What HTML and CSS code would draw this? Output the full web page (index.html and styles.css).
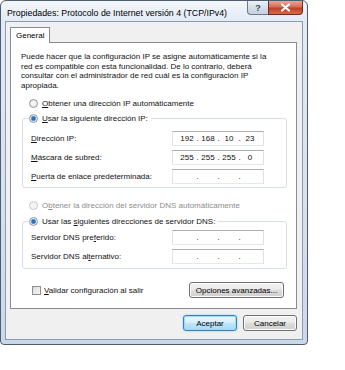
FILE: index.html
```html
<!DOCTYPE html>
<html lang="es">
<head>
    <meta charset="UTF-8">
    <meta name="viewport" content="width=device-width, initial-scale=1.0">
    <title>Propiedades: Protocolo de Internet versión 4 (TCP/IPv4)</title>
    <link rel="stylesheet" href="styles.css">
</head>
<body>
<div class="window">
    <div class="titlebar">
        <span class="title">Propiedades: Protocolo de Internet versión 4 (TCP/IPv4)</span>
        <div class="caption">
            <span class="cbtn help">?</span>
            <span class="cbtn close">
                <svg width="11" height="9" viewBox="0 0 11 9"><path d="M2 1.5 L9 7.5 M9 1.5 L2 7.5" stroke="#fff" stroke-width="2.2" stroke-linecap="round"/></svg>
            </span>
        </div>
    </div>
    <div class="client">
        <div class="tabs"><span class="tab">General</span></div>
        <div class="pane">
            <p class="intro">Puede hacer que la configuración IP se asigne automáticamente si la red es compatible con esta funcionalidad. De lo contrario, deberá consultar con el administrador de red cuál es la configuración IP apropiada.</p>

            <div class="opt first"><span class="radio"></span><span><u>O</u>btener una dirección IP automáticamente</span></div>
            <fieldset class="group ipgroup">
                <legend><span class="opt"><span class="radio on"></span><span><u>U</u>sar la siguiente dirección IP:</span></span></legend>
                <div class="row">
                    <span class="lbl"><u>D</u>irección IP:</span>
                    <span class="ip"><span>192</span><i>.</i><span>168</span><i>.</i><span>10</span><i>.</i><span>23</span></span>
                </div>
                <div class="row">
                    <span class="lbl"><u>M</u>áscara de subred:</span>
                    <span class="ip"><span>255</span><i>.</i><span>255</span><i>.</i><span>255</span><i>.</i><span>0</span></span>
                </div>
                <div class="row">
                    <span class="lbl"><u>P</u>uerta de enlace predeterminada:</span>
                    <span class="ip"><span></span><i>.</i><span></span><i>.</i><span></span><i>.</i><span></span></span>
                </div>
            </fieldset>

            <div class="opt dns disabled"><span class="radio"></span><span>O<u>b</u>tener la dirección del servidor DNS automáticamente</span></div>
            <fieldset class="group dnsgroup">
                <legend><span class="opt"><span class="radio on"></span><span>Usar las <u>s</u>iguientes direcciones de servidor DNS:</span></span></legend>
                <div class="row">
                    <span class="lbl">Servidor DNS pre<u>f</u>erido:</span>
                    <span class="ip"><span></span><i>.</i><span></span><i>.</i><span></span><i>.</i><span></span></span>
                </div>
                <div class="row">
                    <span class="lbl">Servidor DNS al<u>t</u>ernativo:</span>
                    <span class="ip"><span></span><i>.</i><span></span><i>.</i><span></span><i>.</i><span></span></span>
                </div>
            </fieldset>

            <div class="bottom-row">
                <span class="check"><span class="box"></span><span><u>V</u>alidar configuración al salir</span></span>
                <button type="button" class="btn advanced">Opciones avanzadas...</button>
            </div>
        </div>
        <div class="actions">
            <button type="button" class="btn default">Aceptar</button>
            <button type="button" class="btn">Cancelar</button>
        </div>
    </div>
</div>
</body>
</html>
```

FILE: styles.css
```css
body {margin: 0; background: #fff; font-family: "Liberation Sans", Arial, sans-serif; font-size: 8px; color: #111;}

.window {width: 308px; height: 345px; box-sizing: border-box; border: 1px solid #4f5d6e; border-radius: 6px 6px 4px 4px; padding: 0 4px 4px; display: flex; flex-direction: column; background: linear-gradient(#f4f7fb, #e2eaf4 20px, #d6e1ee 60%, #c9d8ea);}

.titlebar {height: 20px; display: flex; align-items: flex-start;}
.title {padding: 6px 0 0 2px; font-size: 8.8px; color: #000; line-height: 12px;}
.caption {margin-left: auto; display: flex;}
.cbtn {height: 14px; display: flex; align-items: center; justify-content: center; box-sizing: border-box; border: 1px solid #6d7a8a; border-top: none;}
.help {width: 21px; border-radius: 0 0 0 4px; border-right: none; background: linear-gradient(#eef2f7, #d5dde8 50%, #c6d1df); color: #3c4a5c; font-weight: bold; font-size: 9px;}
.close {width: 35px; border-radius: 0 0 4px 0; border-color: #6a2c24; background: linear-gradient(#e9a99b, #d26e5a 45%, #c13f25 55%, #d76a48);}

.client {flex: 1; background: #f0f0f0; border: 1px solid #8b9cb2; display: flex; flex-direction: column; padding: 5px 0 0 0;}
.tabs {padding-left: 4px; display: flex;}
.tab {position: relative; z-index: 1; height: 15px; line-height: 15px; padding: 0 5px; border: 1px solid #898c95; border-bottom: none; background: #fff; color: #000;}

.pane {margin: -1px 5px 0 4px; border: 1px solid #898c95; background: #fff; padding: 9px 10px 10px;}
.intro {margin: 0; width: 252px; line-height: 9.6px;}

.opt {display: flex; align-items: center; height: 14px; gap: 4px;}
.opt.first {margin: 6px 0 1px 8px;}
.opt.dns {margin: 10px 0 2px 8px;}
.disabled {color: #8d8d8d;}

.radio {width: 9px; height: 9px; box-sizing: border-box; border-radius: 50%; border: 1px solid #8e9aa6; background: radial-gradient(circle, #f6f6f6 30%, #dcdcdc);}
.radio.on {background: radial-gradient(circle, #2e6fbd 0 1.6px, #7ab0e6 2.4px, #e4ecf4 3px, #d6d6d6);}
.disabled .radio {border-color: #c4c8cc; background: #f4f4f4;}

.group {margin: 0 -1px 0 1px; padding: 0 0 3px; border: 1px solid #d5dfe5; border-radius: 3px; min-width: 0;}
.group legend {margin-left: 6px; padding: 0 3px 0 0;}
.ipgroup {padding-top: 6px;}
.dnsgroup {padding-top: 2px; padding-bottom: 4px;}

.row {display: flex; align-items: center; padding-left: 8px; height: 15px; margin-bottom: 4px;}
.row:last-child {margin-bottom: 0;}
.lbl {width: 141px;}
.ip {width: 92px; height: 15px; box-sizing: border-box; border: 1px solid; border-color: #abadb3 #dbdfe6 #e3e9ef #e2e3ea; background: #fff; padding-left: 6px; display: grid; grid-template-columns: 16px 5px 16px 5px 16px 5px 16px; align-items: center; text-align: center;}
.ip i {font-style: normal;}

.bottom-row {display: flex; align-items: center; justify-content: space-between; margin-top: 13px; height: 16px;}
.check {display: flex; align-items: center; gap: 3px; margin-left: 11px;}
.box {width: 9px; height: 9px; box-sizing: border-box; border: 1px solid #8f8f8f; background: linear-gradient(135deg, #dcdcdc, #f6f6f6);}

.btn {height: 16px; box-sizing: border-box; border: 1px solid #707070; border-radius: 3px; padding: 0; font-family: inherit; font-size: 8px; color: #000; background: linear-gradient(#f2f2f2, #ebebeb 45%, #dddddd 50%, #cfcfcf); box-shadow: inset 0 0 0 1px #fcfcfc;}
.advanced {width: 95px; margin-right: 2px;}

.actions {display: flex; justify-content: flex-end; gap: 6px; padding: 6px 5px 0 0;}
.actions .btn {width: 54px;}
.btn.default {border-color: #3c7fb1; background: linear-gradient(#eaf6fd, #d9f0fc 45%, #bee6fd 50%, #a7d9f5); box-shadow: inset 0 0 0 1px #9fdcf9, 0 0 2px #6ec8f5;}
```
